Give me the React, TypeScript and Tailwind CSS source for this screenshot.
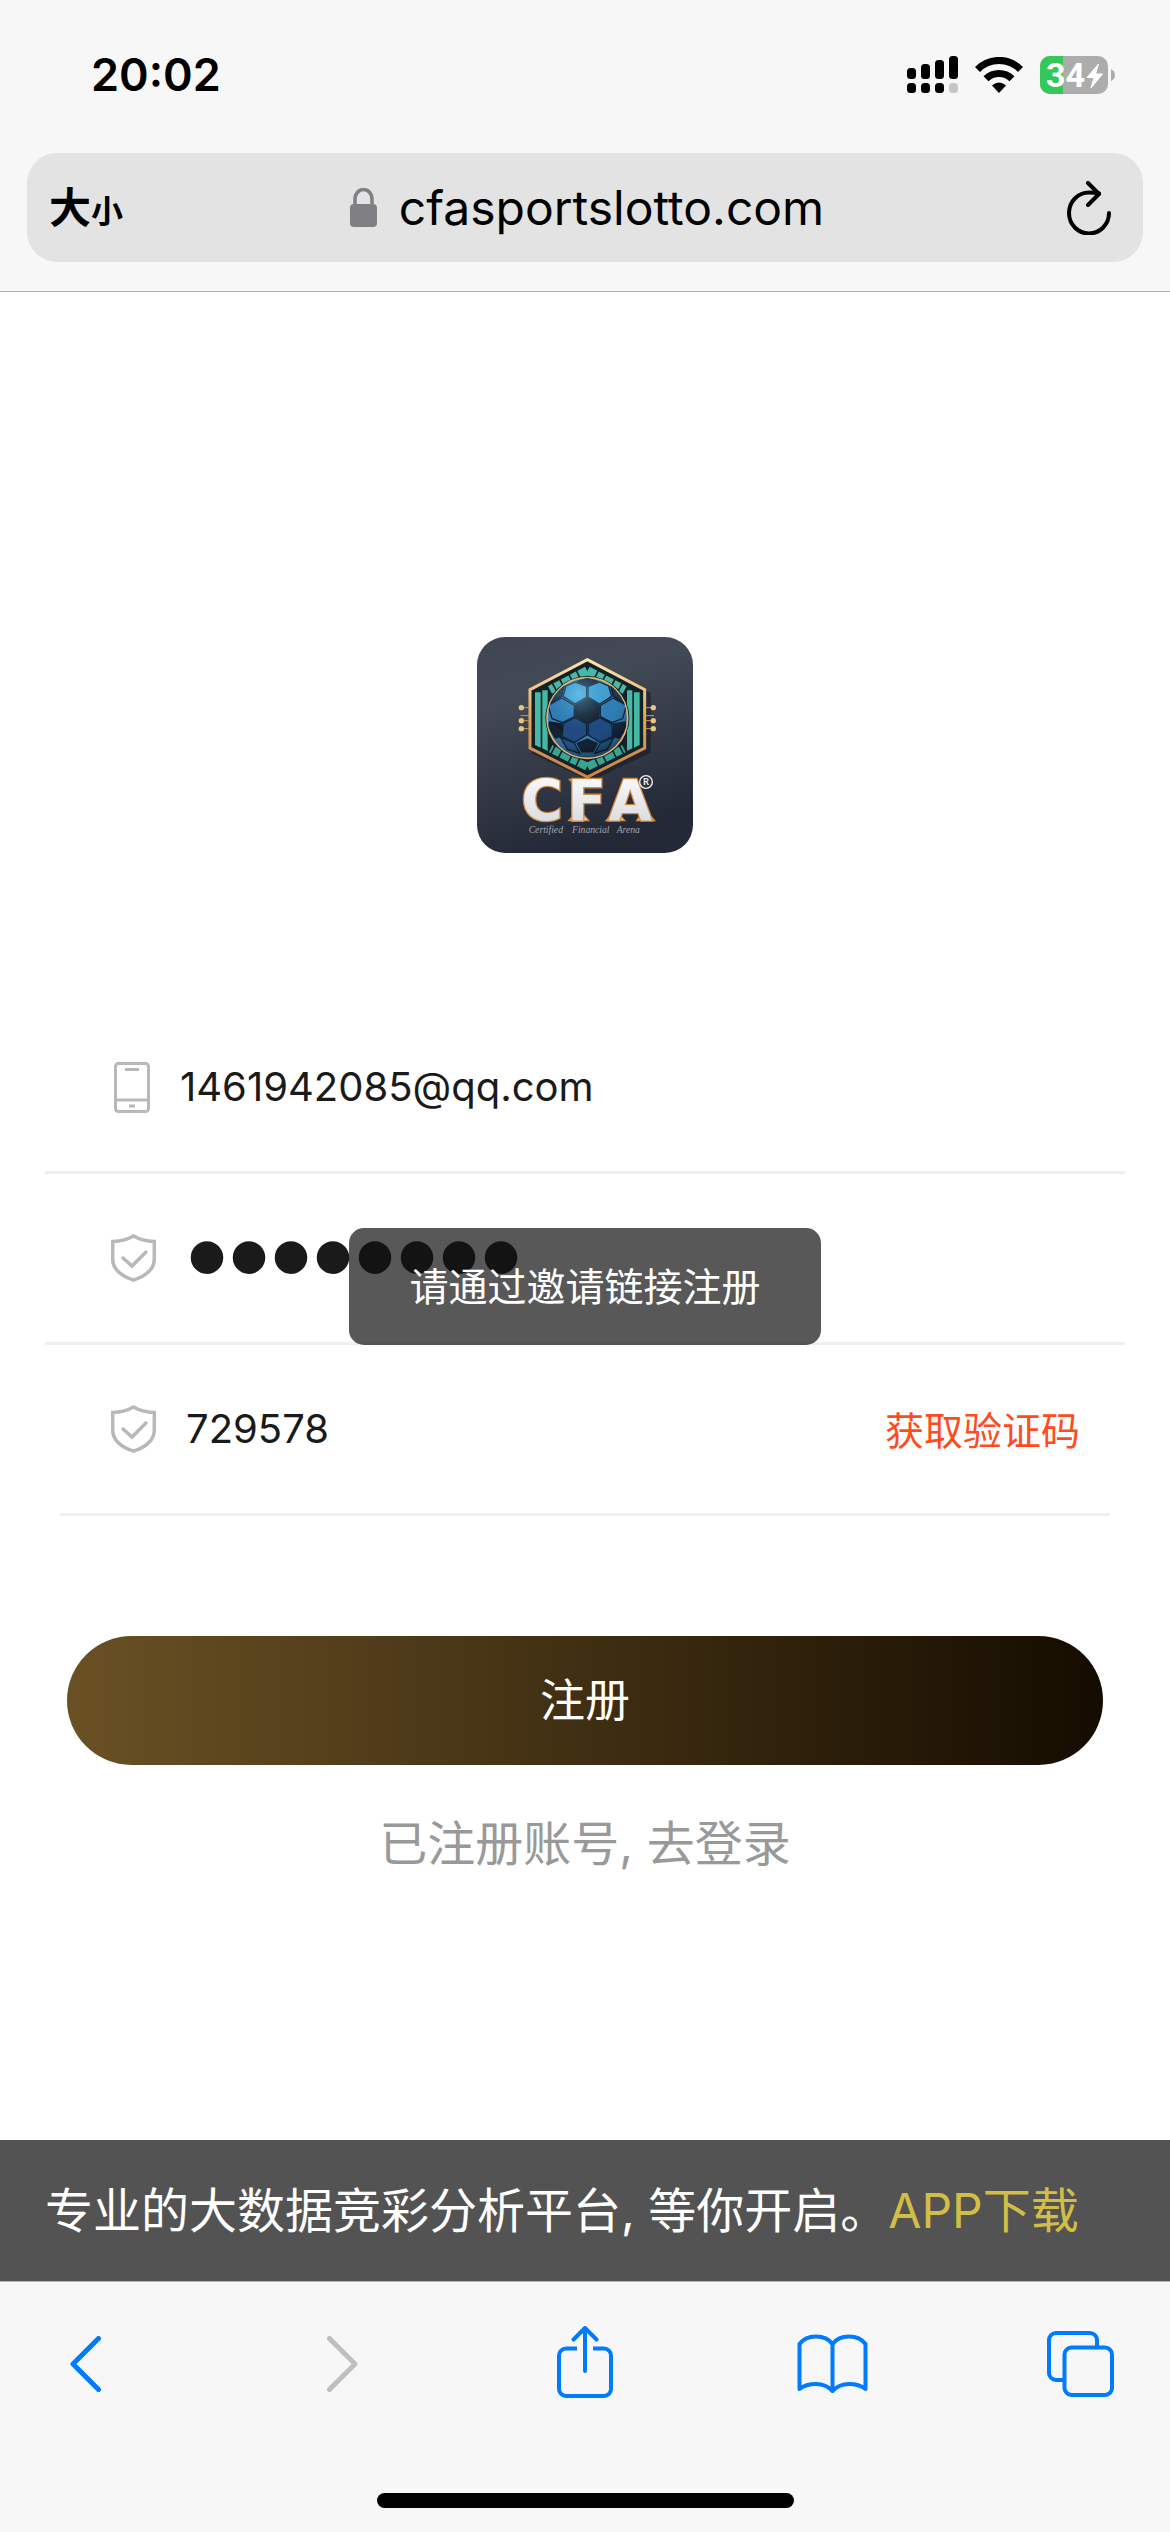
import { useState } from "react";

const sans = "font-['Inter','Noto_Sans_CJK_SC',sans-serif]";

function SignalIcon() {
    return (
        <svg width="51" height="38" viewBox="0 0 51 38" aria-hidden="true">
            <rect x="0" y="12" width="9" height="11" rx="3.5" />
            <rect x="14" y="8" width="9" height="15" rx="3.5" />
            <rect x="28" y="4" width="9" height="19" rx="3.5" />
            <rect x="42" y="0" width="9" height="23" rx="3.5" />
            <rect x="0" y="27" width="9" height="10" rx="3.5" />
            <rect x="14" y="27" width="9" height="10" rx="3.5" />
            <rect x="28" y="27" width="9" height="10" rx="3.5" />
            <rect x="42" y="27" width="9" height="10" rx="3.5" fill="#c7c7c7" />
        </svg>
    );
}

function WifiIcon() {
    return (
        <svg width="48" height="36" viewBox="0 0 48 36" aria-hidden="true">
            <path d="M2.500 12.500A30 30 0 0 1 45.500 12.500" fill="none" stroke="#000" strokeWidth="7" />
            <path d="M11 21.800A18.500 18.500 0 0 1 37 21.800" fill="none" stroke="#000" strokeWidth="7" />
            <path d="M24 36l-7-7.500q7-6 14 0z" />
        </svg>
    );
}

function BatteryIcon() {
    return (
        <svg width="75" height="38" viewBox="0 0 75 38" aria-label="34%">
            <clipPath id="battery">
                <rect width="68" height="38" rx="10" />
            </clipPath>
            <g clipPath="url(#battery)">
                <rect width="68" height="38" fill="#acacac" />
                <rect width="23" height="38" fill="#34c85a" />
            </g>
            <path d="M71 13q4 2 4 6t-4 6z" fill="#acacac" />
            <text x="6" y="31" fill="#fff" fontSize="34" fontWeight="700" fontFamily="Roboto, sans-serif">
                34
            </text>
            <path d="M58.500 8L47 21.500h7L51 32l11.500-14h-7z" fill="#fff" stroke="#fff" strokeWidth="1" strokeLinejoin="round" />
        </svg>
    );
}

function PhoneIcon() {
    return (
        <svg width="45" height="51" viewBox="0 0 45 51" fill="none" stroke="#b8b8b8" strokeWidth="3" aria-hidden="true">
            <rect x="4.500" y="1.500" width="33" height="48" rx="3" />
            <path d="M4 38h34M14 7.500h14M18 44h6" />
        </svg>
    );
}

function ShieldIcon() {
    return (
        <svg width="45" height="48" viewBox="0 0 45 48" fill="none" stroke="#b8b8b8" strokeWidth="3.500" aria-hidden="true">
            <path d="M22.500 2Q14 7 1.700 7.500V25q0 14 20.800 21.200q20.800-7.200 20.800-21.200V7.500Q31 7 22.500 2z" />
            <path d="M12 24l9 8L35 18" strokeLinecap="round" />
        </svg>
    );
}

const panels = [
    { points: "318,198 345,186 380,199 380,231 345,252 309,229", fill: "#3fa0d2" },
    { points: "264,256 305,234 343,256 343,290 308,308 276,296", fill: "#2f7db4" },
    { points: "309,311 345,293 380,312 380,345 344,367 306,350", fill: "#1f497f" },
    { points: "302,352 343,369 360,400 322,388", fill: "#26598c" },
    { points: "268,306 305,312 303,350 286,354 266,322", fill: "#141b29" },
    { points: "288,216 312,198 304,229 270,249", fill: "#1d3550" },
];

// left half, mirrored for the right one
function HalfCrest() {
    return (
        <g>
            <path d="M381 152L270 210" stroke="#46b8a3" strokeWidth="26" strokeDasharray="26 5 20 5" />
            <path d="M381 440L272 386" stroke="#38a593" strokeWidth="24" strokeDasharray="28 5 20 5" />
            <path d="M225 217h17v166l-17-8zM247 211h16v182l-16-8z" fill="#46b8a3" />
            <path d="M208 263h-22M208 287h-26M208 302h-22M208 326h-22" stroke="#c99a5b" strokeWidth="3" />
            <g fill="#e9c483">
                <circle cx="184" cy="263" r="8" />
                <circle cx="184" cy="302" r="8" />
                <circle cx="184" cy="326" r="8" />
            </g>
        </g>
    );
}

function HalfBall() {
    return (
        <g stroke="#0d1a2b" strokeWidth="4" strokeLinejoin="round">
            {panels.map((panel) => (
                <polygon key={panel.points} points={panel.points} fill={panel.fill} />
            ))}
        </g>
    );
}

function Logo() {
    return (
        <svg className="size-[216px]" viewBox="51 51 648 648" role="img" aria-label="CFA">
            <defs>
                <linearGradient id="plate" x1="0" y1="0" x2="0.3" y2="1">
                    <stop offset="0" stopColor="#3d4651" />
                    <stop offset="0.3" stopColor="#424a55" />
                    <stop offset="1" stopColor="#242937" />
                </linearGradient>
                <linearGradient id="gold" x1="0" y1="0" x2="0" y2="1">
                    <stop offset="0" stopColor="#ffe2ae" />
                    <stop offset="0.5" stopColor="#e3a65c" />
                    <stop offset="1" stopColor="#c8834a" />
                </linearGradient>
                <linearGradient id="silver" x1="0" y1="0" x2="0" y2="1">
                    <stop offset="0" stopColor="#ffffff" />
                    <stop offset="1" stopColor="#d3d5da" />
                </linearGradient>
                <radialGradient id="shine" cx="0.4" cy="0.2" r="0.8">
                    <stop offset="0" stopColor="#8fe0ff" stopOpacity="0.45" />
                    <stop offset="0.6" stopColor="#2a6ea8" stopOpacity="0" />
                    <stop offset="1" stopColor="#02060f" stopOpacity="0.5" />
                </radialGradient>
                <clipPath id="ball">
                    <circle cx="382" cy="294" r="119" />
                </clipPath>
            </defs>
            <rect x="51" y="51" width="648" height="648" rx="84" fill="url(#plate)" />
            <path d="M390 130l182 88v180l-182 86-176-84z" fill="#171c27" opacity="0.6" />
            <path d="M382 119l172 90v175l-172 87-172-87V209z" fill="#122028" stroke="url(#gold)" strokeWidth="9" />
            <HalfCrest />
            <g transform="translate(764 0) scale(-1 1)">
                <HalfCrest />
            </g>
            <circle cx="382" cy="294" r="126" fill="#122028" />
            <circle cx="382" cy="294" r="121" fill="#3f7fae" stroke="#e2b36c" strokeWidth="5" />
            <g clipPath="url(#ball)">
                <HalfBall />
                <g transform="translate(764 0) scale(-1 1)">
                    <HalfBall />
                </g>
                <g stroke="#0d1a2b" strokeWidth="3">
                    <path d="M382 234l37 22-2 36-35 18-35-18-2-36z" fill="#151b27" />
                    <path d="M351 370l31-13 31 13-14 26h-34z" fill="#121925" />
                    <path d="M350 184l32-10 32 10-32 13z" fill="#15202f" />
                </g>
                <circle cx="382" cy="294" r="119" fill="url(#shine)" />
            </g>
            <path
                d="M328 478h34v16h-20zM326 602l12-14h36l12 14zM438 602l12-14h32l12 14zM530 602l10-14h32l12 14z"
                fill="#d9dade"
                stroke="#d18a42"
                strokeWidth="4"
            />
            <g
                fontSize="170"
                fontWeight="700"
                fontFamily="DejaVu Sans, sans-serif"
                fill="url(#silver)"
                stroke="#d18a42"
                strokeWidth="8"
                paintOrder="stroke"
            >
                <text x="184" y="602">C</text>
                <text x="322" y="602">F</text>
                <text x="445" y="602">A</text>
            </g>
            <circle cx="558" cy="486" r="19" fill="#2b313d" stroke="#f2f2f2" strokeWidth="4" />
            <text x="558" y="496" textAnchor="middle" fontSize="28" fontWeight="700" fontFamily="Lato, sans-serif" fill="#f2f2f2">
                R
            </text>
            <g fontSize="29" fontStyle="italic" fontFamily="Liberation Serif, serif" fill="#a3a6ac">
                <text x="206" y="640">Certified</text>
                <text x="336" y="640">Financial</text>
                <text x="470" y="640">Arena</text>
            </g>
        </svg>
    );
}

function StatusBar() {
    return (
        <div className="flex h-[153px] items-center justify-between pr-[55px] pb-1 pl-[91px]">
            <span className="text-[45px] leading-none font-semibold">20:02</span>
            <div className="flex items-center gap-[17px]">
                <SignalIcon />
                <WifiIcon />
                <BatteryIcon />
            </div>
        </div>
    );
}

function AddressBar() {
    return (
        <div className="mx-[27px] mb-[29px] grid h-[109px] grid-cols-[96px_1fr_96px] items-center rounded-[30px] bg-[#e3e3e3]">
            <button className="flex items-baseline pl-[22px] leading-none font-bold whitespace-nowrap" aria-label="大小">
                <span className="text-[42px]">大</span>
                <span className="text-[32px]">小</span>
            </button>
            <div className="flex items-center justify-center gap-[22px] pl-1">
                <svg width="27" height="39" viewBox="0 0 27 39" aria-hidden="true">
                    <path d="M5 18V11a8.500 9.500 0 0 1 17 0v7" fill="none" stroke="#7f7f84" strokeWidth="3.500" />
                    <rect y="16" width="27" height="23" rx="4" fill="#7f7f84" />
                </svg>
                <span className="text-[48px] leading-none">cfasportslotto.com</span>
            </div>
            <button className="justify-self-end pr-8" aria-label="刷新">
                <svg width="44" height="54" viewBox="0 0 44 54" fill="none" stroke="#000" strokeWidth="4" strokeLinecap="round" strokeLinejoin="round">
                    <path d="M42 32A20 20.500 0 1 1 22 11.500q5 0 10 1" />
                    <path d="M21 2l11 11-11 11" />
                </svg>
            </button>
        </div>
    );
}

function RegisterForm() {
    const [account, setAccount] = useState("1461942085@qq.com");
    const [password, setPassword] = useState("12345678");
    const [code, setCode] = useState("729578");

    return (
        <form className="mt-[150px] px-[45px]" onSubmit={(e) => e.preventDefault()}>
            <label className="flex h-[171px] items-center gap-6 border-b-3 border-[#efefef] pl-[66px]">
                <PhoneIcon />
                <input
                    type="text"
                    aria-label="账号"
                    value={account}
                    onChange={(e) => setAccount(e.target.value)}
                    className="h-[60px] min-w-0 flex-1 text-[40px] text-[#1a1a1a] outline-none"
                />
            </label>
            <label className="flex h-[171px] items-center gap-[30px] border-b-3 border-[#efefef] pl-[66px]">
                <ShieldIcon />
                <input
                    type="password"
                    aria-label="密码"
                    value={password}
                    onChange={(e) => setPassword(e.target.value)}
                    className="h-[140px] min-w-0 flex-1 pb-1 font-['Liberation_Sans',sans-serif] text-[120px] text-[#1a1a1a] outline-none"
                />
            </label>
            <div className="mx-[15px] flex h-[171px] items-center border-b-3 border-[#efefef] pr-[30px] pl-[51px]">
                <label className="flex min-w-0 flex-1 items-center gap-[30px]">
                    <ShieldIcon />
                    <input
                        type="text"
                        aria-label="验证码"
                        value={code}
                        onChange={(e) => setCode(e.target.value)}
                        className="h-[60px] min-w-0 flex-1 text-[40px] text-[#1a1a1a] outline-none"
                    />
                </label>
                <button type="button" className="pt-1 text-[39px] text-[#ff4c1e]">
                    获取验证码
                </button>
            </div>
            <button
                type="submit"
                className="mx-[22px] mt-[120px] flex h-[129px] w-[calc(100%-44px)] items-center justify-center rounded-full bg-linear-to-r/srgb from-[#6a5124] to-[#150c00] text-[45px] text-white"
            >
                注册
            </button>
            <a href="#login" className="mt-[43px] block text-center text-[48px] leading-[72px] text-[#999999]">
                已注册账号, 去登录
            </a>
        </form>
    );
}

function TabBar() {
    return (
        <footer className="border-t border-[#b8b8bb] bg-[#f7f7f7]">
            <nav className="flex h-[164px] items-center justify-between px-[54px]">
                <button className="flex w-[72px] justify-center" aria-label="后退">
                    <svg width="40" height="56" viewBox="0 0 40 56" fill="none" stroke="#007aff" strokeWidth="5" strokeLinecap="round" strokeLinejoin="round">
                        <path d="M28.500 2.500L3 28l25.500 25.500" />
                    </svg>
                </button>
                <button className="flex w-[72px] justify-center" aria-label="前进" disabled>
                    <svg width="40" height="56" viewBox="0 0 40 56" fill="none" stroke="#bfbfbf" strokeWidth="5" strokeLinecap="round" strokeLinejoin="round">
                        <path d="M11.500 2.500L37 28 11.500 53.500" />
                    </svg>
                </button>
                <button className="flex w-[72px] justify-center" aria-label="分享">
                    <svg width="56" height="76" viewBox="0 0 56 76" fill="none" stroke="#007aff" strokeWidth="4">
                        <path d="M20 22.500H9a7 7 0 0 0-7 7V63a7 7 0 0 0 7 7h38a7 7 0 0 0 7-7V29.500a7 7 0 0 0-7-7H36" />
                        <path d="M28 45V3M16.500 13.500L28 2l11.500 11.500" strokeLinecap="round" strokeLinejoin="round" />
                    </svg>
                </button>
                <button className="flex w-[72px] justify-center" aria-label="书签">
                    <svg width="71" height="60" viewBox="0 0 71 60" fill="none" stroke="#007aff" strokeWidth="4" strokeLinecap="round" strokeLinejoin="round">
                        <path d="M2.500 10Q8 2.500 19 2.500T35.500 10Q41 2.500 52 2.500T68.500 10V55Q62 50 52 50T35.500 57Q29 50 19 50T2.500 55z" />
                        <path d="M35.500 10v47" />
                    </svg>
                </button>
                <button className="flex w-[72px] justify-center" aria-label="标签页">
                    <svg width="67" height="66" viewBox="0 0 67 66" fill="none" stroke="#007aff" strokeWidth="4">
                        <path d="M50 15V9a7 7 0 0 0-7-7H9a7 7 0 0 0-7 7v33a7 7 0 0 0 7 7h7" />
                        <rect x="17.500" y="16.500" width="47.500" height="47.500" rx="7" />
                    </svg>
                </button>
            </nav>
            <div className="mx-auto mt-[47px] mb-6 h-[15px] w-[417px] rounded-full bg-black" />
        </footer>
    );
}

export default function App() {
    return (
        <div className={`flex min-h-screen flex-col bg-white text-black ${sans}`}>
            <header className="border-b border-[#acacac] bg-[#f7f7f7]">
                <StatusBar />
                <AddressBar />
            </header>

            <div className="relative flex flex-1 flex-col">
                <main className="flex-1 pt-[345px]">
                    <div className="flex justify-center">
                        <Logo />
                    </div>
                    <RegisterForm />
                </main>

                <div className="flex h-[141px] items-center bg-[#535353] pl-[45px] text-[48px] whitespace-nowrap text-white">
                    <p>
                        专业的大数据竞彩分析平台, 等你开启。
                        <a href="#download" className="text-[#d3be45]">
                            APP下载
                        </a>
                    </p>
                </div>

                {/* toast over the form */}
                <div className="pointer-events-none absolute inset-0 flex items-center justify-center">
                    <div role="alert" className="rounded-[15px] bg-[#111111]/70 px-[60px] py-[30px] text-[39px] leading-[57px] text-white">
                        请通过邀请链接注册
                    </div>
                </div>
            </div>

            <TabBar />
        </div>
    );
}
